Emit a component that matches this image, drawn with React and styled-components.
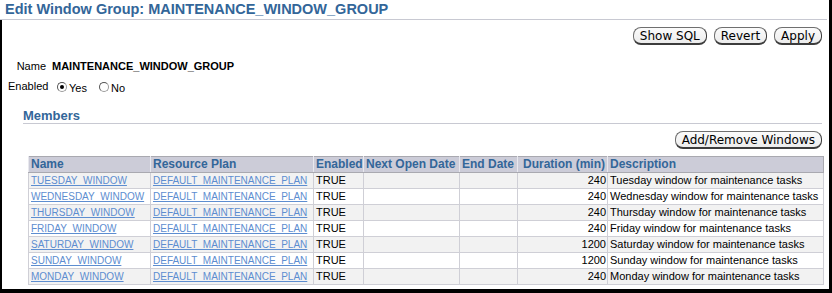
import React from "react";
import styled, { createGlobalStyle } from "styled-components";

const Global = createGlobalStyle`
  html, body { margin: 0; padding: 0; background: #ffffff; }
  body { font-family: Tahoma, "Liberation Sans", Arial, sans-serif; }
  #root { width: 832px; height: 293px; overflow: hidden; }
`;

const Frame = styled.div`
  width: 832px;
  height: 293px;
  display: flex;
  flex-direction: column;
  box-sizing: border-box;
`;

const Header = styled.div`
  height: 20px;
  box-sizing: border-box;
  border-right: 3px solid #000;
  padding-right: 2px;
  display: flex;
`;

const Title = styled.h1`
  flex: 1;
  margin: 0;
  height: 20px;
  box-sizing: border-box;
  padding: 1px 0 0 5px;
  font-family: "Liberation Sans", Arial, sans-serif;
  font-weight: bold;
  font-size: 14.5px;
  line-height: 17px;
  color: #336699;
  border-bottom: 1px solid #c8c9d2;
`;

const Body = styled.div`
  flex: 1;
  box-sizing: border-box;
  border-left: 2px solid #000;
  border-right: 3px solid #000;
  border-bottom: 4px solid #000;
  display: flex;
  flex-direction: column;
`;

const ButtonBar = styled.div`
  display: flex;
  justify-content: flex-end;
  gap: 7px;
  padding: ${(p) => p.$pad || "7px 7px 0 0"};
`;

const Button = styled.button`
  height: 18px;
  box-sizing: border-box;
  padding: 0 6px;
  border: 1px solid #6f6f6f;
  border-right-color: #3c3c3c;
  border-bottom: 2px solid #3c3c3c;
  border-radius: 8px;
  background: linear-gradient(#fbfbfb, #ececec);
  font-family: "DejaVu Sans", sans-serif;
  font-size: 12px;
  line-height: 14px;
  color: #000;
`;

const Form = styled.div`
  display: grid;
  grid-template-columns: 38px auto;
  column-gap: 6px;
  row-gap: 7px;
  padding: 15px 0 0 6px;
  align-items: center;
  font-size: 11px;
  font-family: Tahoma, "Liberation Sans", Arial, sans-serif;
`;

const Label = styled.span`
  text-align: right;
  color: #000;
  white-space: nowrap;
  height: 13px;
  line-height: 13px;
`;

const Value = styled.span`
  font-weight: bold;
  color: #000;
  line-height: 13px;
`;

const RadioGroup = styled.div`
  display: flex;
  align-items: center;
  padding-left: 5px;
`;

const RadioItem = styled.label`
  display: flex;
  align-items: center;
  gap: 2px;
  margin-right: 12px;
  color: #000;
  line-height: 13px;
  span { position: relative; top: 2px; }
`;

const RadioCircle = styled.i`
  width: 10px;
  height: 10px;
  box-sizing: border-box;
  border-radius: 50%;
  border: 1px solid #9a9a9a;
  border-top-color: #555;
  border-left-color: #555;
  background: #fff;
  display: flex;
  align-items: center;
  justify-content: center;
  &::after {
    content: "";
    width: 4px;
    height: 4px;
    border-radius: 50%;
    background: ${(p) => (p.$checked ? "#000" : "transparent")};
  }
`;

const SubHeader = styled.h2`
  margin: 16px 7px 0 21px;
  height: 14px;
  font-family: "Liberation Sans", Arial, sans-serif;
  font-size: 13px;
  line-height: 14px;
  font-weight: bold;
  color: #336699;
  border-bottom: 1px solid #c8c9d2;
  padding-bottom: 0;
`;

const Table = styled.table`
  margin: 7px 0 0 26px;
  width: 795px;
  border-collapse: collapse;
  table-layout: fixed;
  font-family: Tahoma, "Liberation Sans", Arial, sans-serif;
  font-size: 11px;
  border: 1px solid #a9a9b0;
`;

const Th = styled.th`
  height: 15px;
  padding: 0 2px;
  background: #ccccd8;
  color: #336699;
  font-weight: bold;
  font-size: 12px;
  text-align: ${(p) => p.$align || "left"};
  border-left: 1px solid #e8e8ee;
  border-bottom: 1px solid #a9a9b0;
  white-space: nowrap;
  overflow: hidden;
  line-height: 15px;
`;

const Tr = styled.tr`
  background: ${(p) => (p.$alt ? "#f2f2f2" : "#ffffff")};
`;

const Td = styled.td`
  height: 15px;
  padding: 0 1px 0 2px;
  line-height: 15px;
  border: 1px solid #cfcfd6;
  text-align: ${(p) => p.$align || "left"};
  color: #000;
  white-space: nowrap;
  overflow: hidden;
`;

const Link = styled.a`
  color: #5d8dd0;
  text-decoration: underline;
  font-size: 10px;
  cursor: pointer;
`;

const rows = [
  ["TUESDAY_WINDOW", 240, "Tuesday window for maintenance tasks"],
  ["WEDNESDAY_WINDOW", 240, "Wednesday window for maintenance tasks"],
  ["THURSDAY_WINDOW", 240, "Thursday window for maintenance tasks"],
  ["FRIDAY_WINDOW", 240, "Friday window for maintenance tasks"],
  ["SATURDAY_WINDOW", 1200, "Saturday window for maintenance tasks"],
  ["SUNDAY_WINDOW", 1200, "Sunday window for maintenance tasks"],
  ["MONDAY_WINDOW", 240, "Monday window for maintenance tasks"],
];

const cols = [122, 163, 50, 96, 58, 90, 216];

export default function App() {
  return (
    <Frame>
      <Global />
      <Header>
        <Title>Edit Window Group: MAINTENANCE_WINDOW_GROUP</Title>
      </Header>
      <Body>
        <ButtonBar>
          <Button>Show SQL</Button>
          <Button>Revert</Button>
          <Button>Apply</Button>
        </ButtonBar>
        <Form>
          <Label>Name</Label>
          <Value>MAINTENANCE_WINDOW_GROUP</Value>
          <Label>Enabled</Label>
          <RadioGroup>
            <RadioItem>
              <RadioCircle $checked />
              <span>Yes</span>
            </RadioItem>
            <RadioItem>
              <RadioCircle />
              <span>No</span>
            </RadioItem>
          </RadioGroup>
        </Form>
        <SubHeader>Members</SubHeader>
        <ButtonBar $pad="7px 7px 0 0">
          <Button>Add/Remove Windows</Button>
        </ButtonBar>
        <Table>
          <colgroup>
            {cols.map((w, i) => (
              <col key={i} style={{ width: w }} />
            ))}
          </colgroup>
          <thead>
            <tr>
              <Th>Name</Th>
              <Th>Resource Plan</Th>
              <Th>Enabled</Th>
              <Th>Next Open Date</Th>
              <Th>End Date</Th>
              <Th $align="right">Duration (min)</Th>
              <Th>Description</Th>
            </tr>
          </thead>
          <tbody>
            {rows.map(([name, dur, desc], i) => (
              <Tr key={name} $alt={i % 2 === 0}>
                <Td><Link>{name}</Link></Td>
                <Td><Link>DEFAULT_MAINTENANCE_PLAN</Link></Td>
                <Td>TRUE</Td>
                <Td></Td>
                <Td></Td>
                <Td $align="right">{dur}</Td>
                <Td>{desc}</Td>
              </Tr>
            ))}
          </tbody>
        </Table>
      </Body>
    </Frame>
  );
}
